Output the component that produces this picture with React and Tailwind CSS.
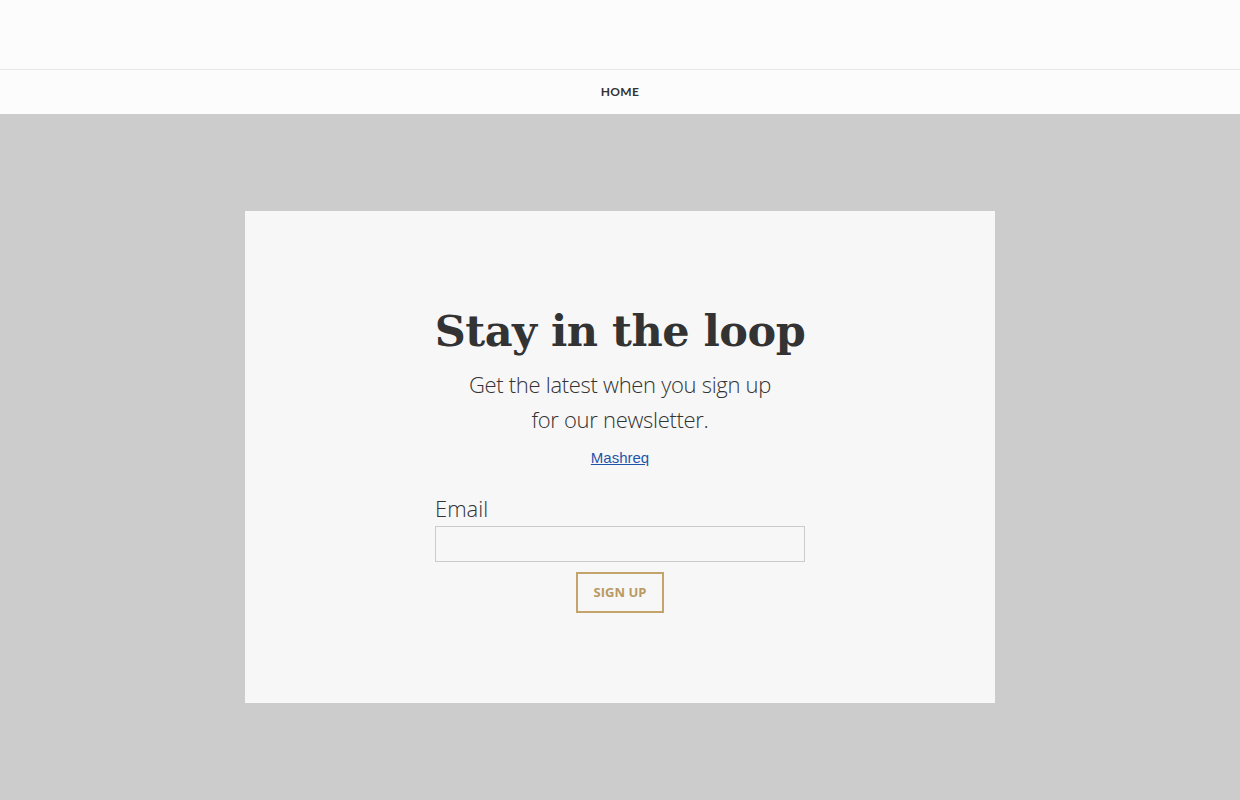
import React from "react";

export default function App() {
  return (
    <div className="min-h-[800px] bg-[#cccccc] font-['Lato',sans-serif]">
      {/* HEADER */}
      <header className="bg-[#fcfcfc]">
        <div className="h-[70px] border-b border-[#e8e8e8]"></div>
        <nav className="h-[44px] flex items-center justify-center">
          <a className="text-[12px] font-bold tracking-[0.3px] text-[#333] uppercase">Home</a>
        </nav>
      </header>

      {/* NEWSLETTER */}
      <div className="pt-[97px] pb-[97px] flex justify-center">
        <div className="w-[750px] h-[492px] bg-[#f7f7f7] flex flex-col items-center pt-[88px]">
          <h1 className="font-['DejaVu_Serif',serif] font-bold text-[43px] leading-[64px] text-[#333] tracking-[-0.5px]">
            Stay in the loop
          </h1>
          <p className="mt-[4px] text-center font-['Open_Sans',sans-serif] font-light text-[22px] leading-[35px] text-[#333] tracking-[-0.3px]">
            Get the latest when you sign up
            <br />
            for our newsletter.
          </p>
          <a
            href="#"
            className="mt-[11px] font-['Liberation_Sans',sans-serif] text-[15px] leading-[20px] text-[#1f55a8] underline"
          >
            Mashreq
          </a>
          <form className="mt-[25px] w-[370px] flex flex-col items-center">
            <label className="self-start font-['Open_Sans',sans-serif] font-light text-[22px] leading-[30px] text-[#333]">
              Email
            </label>
            <input
              type="email"
              className="mt-[3px] w-full h-[36px] border border-[#cccccc] bg-[#f7f7f7] outline-none"
            />
            <button
              type="button"
              className="mt-[10px] w-[88px] h-[41px] border-2 border-[#c4a46b] text-[13px] font-bold uppercase text-[#b99a63] font-['Open_Sans',sans-serif]"
            >
              Sign up
            </button>
          </form>
        </div>
      </div>
    </div>
  );
}
